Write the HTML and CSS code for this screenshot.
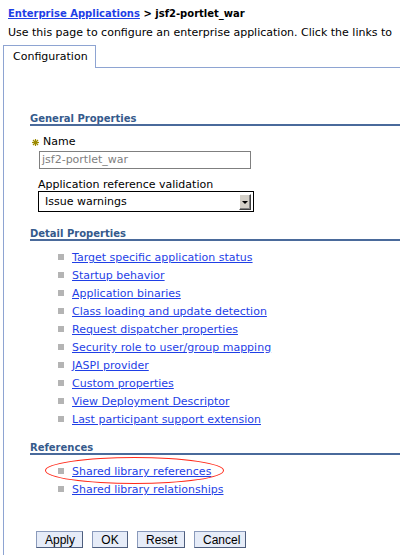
FILE: index.html
```html
<!DOCTYPE html>
<html>
<head>
<meta charset="utf-8">
<link rel="stylesheet" href="styles.css">
</head>
<body>
<div class="breadcrumb"><a href="#" class="crumb-link">Enterprise Applications</a> &gt; jsf2-portlet_war</div>
<div class="desc">Use this page to configure an enterprise application. Click the links to</div>
<div class="tabs">
  <div class="tab">Configuration</div>
  <div class="tab-fill"></div>
</div>
<div class="panel">
  <div class="heading">General Properties</div>
  <div class="field-label name-label">
    <svg class="req" width="7" height="7" viewBox="0 0 7 7"><g stroke="#9c8a00" stroke-width="1.2"><line x1="3.5" y1="0" x2="3.5" y2="7"/><line x1="0" y1="3.5" x2="7" y2="3.5"/><line x1="1" y1="1" x2="6" y2="6"/><line x1="6" y1="1" x2="1" y2="6"/></g></svg>
    <span>Name</span>
  </div>
  <div class="text-input">jsf2-portlet_war</div>
  <div class="field-label app-label">Application reference validation</div>
  <div class="select">
    <span class="select-text">Issue warnings</span>
    <span class="select-btn"><span class="arrow"></span></span>
  </div>

  <div class="heading detail-heading">Detail Properties</div>
  <ul class="links">
    <li><a href="#">Target specific application status</a></li>
    <li><a href="#">Startup behavior</a></li>
    <li><a href="#">Application binaries</a></li>
    <li><a href="#">Class loading and update detection</a></li>
    <li><a href="#">Request dispatcher properties</a></li>
    <li><a href="#">Security role to user/group mapping</a></li>
    <li><a href="#">JASPI provider</a></li>
    <li><a href="#">Custom properties</a></li>
    <li><a href="#">View Deployment Descriptor</a></li>
    <li><a href="#">Last participant support extension</a></li>
  </ul>

  <div class="heading ref-heading">References</div>
  <ul class="links refs">
    <li><a href="#">Shared library references</a></li>
    <li><a href="#">Shared library relationships</a></li>
    <li class="ellipse" aria-hidden="true"></li>
  </ul>

  <div class="buttons">
    <button class="btn">Apply</button>
    <button class="btn">OK</button>
    <button class="btn">Reset</button>
    <button class="btn">Cancel</button>
  </div>
</div>
</body>
</html>
```
FILE: styles.css
```css
html, body {
  margin: 0;
  padding: 0;
  background: #ffffff;
}
body {
  width: 400px;
  height: 556px;
  overflow: hidden;
  font-family: "DejaVu Sans", Verdana, sans-serif;
  font-size: 11px;
  color: #000;
}
a {
  color: #1f3fe6;
  text-decoration: underline;
}
.breadcrumb {
  padding: 7px 0 0 8px;
  line-height: 14px;
  font-size: 10px;
  font-weight: bold;
  white-space: nowrap;
}
.desc {
  margin-top: 5px;
  padding-left: 8px;
  line-height: 14px;
  white-space: nowrap;
}
.tabs {
  margin-top: 5px;
  margin-left: 3px;
  display: flex;
  height: 23px;
}
.tab {
  width: 93px;
  box-sizing: border-box;
  height: 23px;
  border: 1px solid #8ea4d2;
  border-bottom: none;
  padding-left: 9px;
  line-height: 21px;
}
.tab-fill {
  flex: 1;
  box-sizing: border-box;
  height: 23px;
  border-bottom: 1px solid #8ea4d2;
}
.panel {
  margin-left: 3px;
  border-left: 1px solid #8ea4d2;
  padding: 45px 0 7px 26px;
}
.heading {
  font-size: 10px;
  font-weight: bold;
  color: #355a8c;
  line-height: 11px;
  border-bottom: 2px solid #4a6a9b;
  white-space: nowrap;
}
.field-label {
  line-height: 14px;
  white-space: nowrap;
}
.name-label {
  margin-top: 9px;
  padding-left: 2px;
  display: flex;
  align-items: center;
  gap: 4px;
}
.text-input {
  margin: 2px 0 0 9px;
  width: 212px;
  height: 18px;
  box-sizing: border-box;
  border: 1px solid #7f7f7f;
  color: #808080;
  line-height: 16px;
  padding-left: 2px;
}
.app-label {
  margin: 10px 0 0 8px;
  line-height: 12px;
}
.select {
  margin-left: 8px;
  width: 216px;
  height: 21px;
  box-sizing: border-box;
  border: 1px solid #000;
  display: flex;
  align-items: center;
  justify-content: space-between;
  padding: 0 2px 0 6px;
}
.select-text {
  line-height: 14px;
}
.select-btn {
  width: 12px;
  height: 16px;
  box-sizing: border-box;
  background: #d4d0c8;
  border-top: 1px solid #ffffff;
  border-left: 1px solid #ffffff;
  border-right: 1px solid #404040;
  border-bottom: 1px solid #404040;
  box-shadow: inset -1px -1px 0 #808080;
  display: flex;
  align-items: center;
  justify-content: center;
}
.arrow {
  width: 0;
  height: 0;
  border-left: 3px solid transparent;
  border-right: 3px solid transparent;
  border-top: 3px solid #000;
  margin-top: 2px;
}
.detail-heading {
  margin-top: 16px;
}
.links {
  list-style: none;
  margin: 8px 0 0 0;
  padding: 0 0 0 28px;
}
.links li {
  display: flex;
  align-items: center;
  gap: 8px;
  line-height: 18px;
  height: 18px;
  white-space: nowrap;
}
.links li::before {
  content: "";
  width: 6px;
  height: 6px;
  background: #b4b4b4;
  margin-top: -3px;
  flex: none;
}
.ref-heading {
  margin-top: 13px;
}
.refs {
  position: relative;
}
.links li.ellipse {
  position: absolute;
  left: 15px;
  top: -6px;
  width: 179px;
  height: 27px;
  box-sizing: border-box;
  border: 1px solid #ff2a1a;
  border-radius: 50%;
}
.links li.ellipse::before {
  content: none;
}
.buttons {
  margin: 32px 0 0 6px;
  display: flex;
  gap: 9px;
}
.btn {
  font-family: "Liberation Sans", Arial, sans-serif;
  font-size: 12px;
  height: 17px;
  padding: 0 8px;
  line-height: 14px;
  background: #e6ecf8;
  border: 1px solid #8a9abb;
  border-right-color: #4d5d7d;
  border-bottom-color: #4d5d7d;
  color: #000;
  margin: 0;
}
.btn:nth-child(1) { width: 47px; }
.btn:nth-child(2) { width: 36px; }
.btn:nth-child(3) { width: 48px; }
.btn:nth-child(4) { width: 52px; }
```
